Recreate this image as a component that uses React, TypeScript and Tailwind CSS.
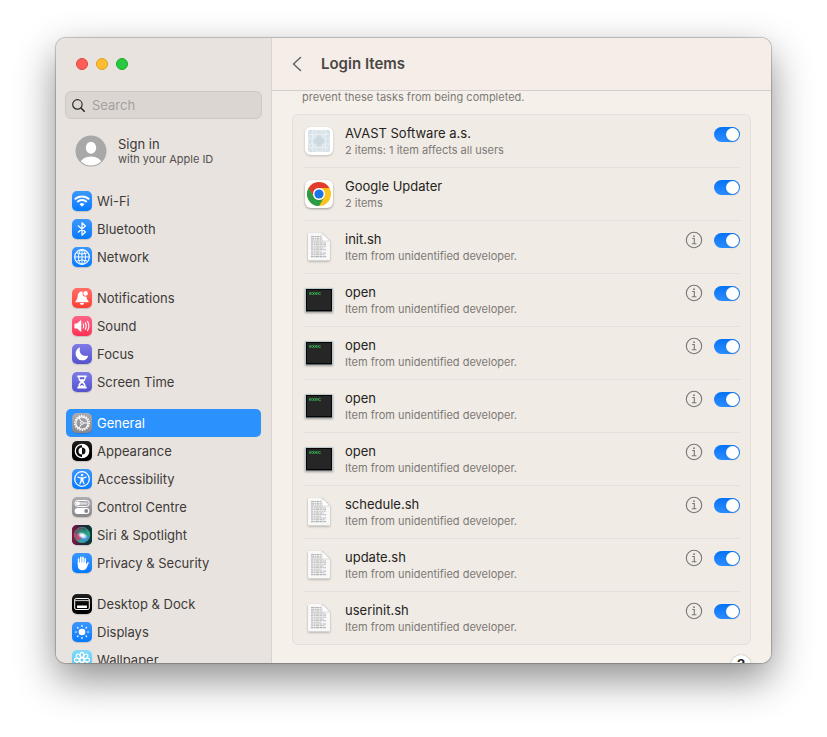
import type { ReactNode } from 'react';

const spokes = [0, 45, 90, 135, 180, 225, 270, 315];

const glyphs: Record<string, ReactNode> = {
  wifi: (
    <g fill="none" stroke="#fff" strokeWidth="1.9">
      <path d="M2.8 8.4a10.3 10.3 0 0 1 14.4 0" />
      <path d="M5.3 11a6.7 6.7 0 0 1 9.4 0" />
      <path d="M10 15.8 7.6 13.3a3.4 3.4 0 0 1 4.8 0z" fill="#fff" stroke="none" />
    </g>
  ),
  bluetooth: (
    <path
      d="M6.2 6.8 13.4 13 10 16.2V3.8L13.4 7 6.2 13.2"
      fill="none"
      stroke="#fff"
      strokeWidth="1.2"
      strokeLinejoin="round"
      strokeLinecap="round"
    />
  ),
  network: (
    <g fill="none" stroke="#fff" strokeWidth="1">
      <circle cx="10" cy="10" r="7.3" strokeWidth="1.2" />
      <ellipse cx="10" cy="10" rx="3.5" ry="7.3" />
      <path d="M10 2.7v14.6M2.7 10h14.6M4.3 5.8q5.7 2.6 11.4 0M4.3 14.2q5.7-2.6 11.4 0" />
    </g>
  ),
  bell: (
    <g fill="#fff">
      <path d="M10 3.4c-2.9 0-4.3 2.1-4.4 4.9-.1 2.4-.8 3.5-1.9 4.6-.6.6-.4 1.3.4 1.3h11.8c.8 0 1-.7.4-1.3-1.1-1.1-1.8-2.2-1.9-4.6-.1-2.8-1.5-4.9-4.4-4.9z" />
      <path d="M8 15h4a2 2 0 0 1-4 0z" />
      <circle cx="13.6" cy="5.4" r="3.1" fill="#ff5d55" />
      <circle cx="13.6" cy="5.4" r="2.3" />
    </g>
  ),
  sound: (
    <g fill="none" stroke="#fff" strokeWidth="1.1" strokeLinecap="round">
      <path d="M2.4 8.2c0-.5.3-.8.8-.8h1.9l3.4-3c.4-.3.8-.1.8.4v10.4c0 .5-.4.7-.8.4l-3.4-3H3.2c-.5 0-.8-.3-.8-.8z" fill="#fff" stroke="none" />
      <path d="M11.2 8q1.2 2 0 4M13.3 6.7q2 3.3 0 6.6M15.5 5.4q2.9 4.6 0 9.2" />
    </g>
  ),
  moon: (
    <path
      d="M7.5 3.6c.4-.2.7.1.5.5-1.5 4.8 1.9 8.7 7.4 7.7.5-.1.8.2.6.6a6.3 6.3 0 0 1-5.8 3.9A6.5 6.5 0 0 1 3.6 9.8c0-2.8 1.6-5.1 3.9-6.2z"
      fill="#fff"
    />
  ),
  hourglass: (
    <g>
      <path
        d="M5.3 3.5h9.4v1.7h-1c0 2.5-.9 3.7-2.4 4.8 1.5 1.1 2.4 2.3 2.4 4.8h1v1.7H5.3v-1.7h1c0-2.5.9-3.7 2.4-4.8-1.5-1.1-2.4-2.3-2.4-4.8h-1z"
        fill="#fff"
      />
      <path d="M7.6 5.2h4.8q0 1-.5 2H8.1q-.5-1-.5-2zM10 11q-2 1.4-2.3 3l2.3-1 2.3 1Q12 12.4 10 11z" fill="#5d58cf" />
    </g>
  ),
  gear: (
    <g fill="none" stroke="#fff">
      <circle cx="10" cy="10" r="7.3" strokeWidth="1.4" strokeDasharray="1.4 1.148" />
      <circle cx="10" cy="10" r="6.2" strokeWidth="1.2" />
      <circle cx="10" cy="10" r="1.4" strokeWidth=".9" />
      <path d="M11.5 10H16M9.3 8.7 7 4.8M9.3 11.3 7 15.2" strokeWidth="1" />
    </g>
  ),
  appearance: (
    <g>
      <circle cx="10" cy="10" r="6.7" fill="none" stroke="#fff" strokeWidth="1.3" />
      <path d="M10 3.3a6.7 6.7 0 0 1 0 13.4z" fill="#fff" />
      <path d="M10 6.5a3.5 3.5 0 0 0 0 7z" fill="#fff" />
      <path d="M10 6.5a3.5 3.5 0 0 1 0 7z" fill="#111" />
    </g>
  ),
  accessibility: (
    <g fill="none" stroke="#fff">
      <circle cx="10" cy="10" r="7.3" strokeWidth="1.2" />
      <circle cx="10" cy="6" r="1.3" fill="#fff" stroke="none" />
      <path d="M5.9 8.2 8.7 9h2.6l2.8-.8" strokeWidth="1.2" strokeLinecap="round" />
      <path d="M8.6 8.7h2.8v2.8l1.2 3.6-.7.3L10 12l-1.9 3.4-.7-.3 1.2-3.6z" fill="#fff" strokeWidth=".2" />
    </g>
  ),
  controls: (
    <g>
      <rect x="2.8" y="3.5" width="14.4" height="6" rx="3" fill="none" stroke="#fff" strokeWidth="1" />
      <circle cx="5.8" cy="6.5" r="2" fill="#fff" />
      <rect x="6" y="5.2" width="9.5" height="2.6" rx="1.3" fill="#fff" opacity=".6" />
      <rect x="2.6" y="11" width="14.8" height="6" rx="3" fill="#fff" />
      <circle cx="14.2" cy="14" r="1.9" fill="#85858a" />
    </g>
  ),
  siri: (
    <g>
      <defs>
        <linearGradient id="siri-back" x2="1" y2="0">
          <stop stopColor="#8c1544" />
          <stop offset=".45" stopColor="#27213c" />
          <stop offset="1" stopColor="#064038" />
        </linearGradient>
        <linearGradient id="siri-orb" x2="1" y2="1">
          <stop stopColor="#b3305f" />
          <stop offset=".4" stopColor="#2b6f6c" />
          <stop offset=".65" stopColor="#2fae90" />
          <stop offset="1" stopColor="#3574d8" />
        </linearGradient>
        <radialGradient id="siri-glow">
          <stop stopColor="#fff" />
          <stop offset=".4" stopColor="#eef6ff" stopOpacity=".9" />
          <stop offset="1" stopColor="#9cf" stopOpacity="0" />
        </radialGradient>
      </defs>
      <rect width="20" height="20" fill="url(#siri-back)" />
      <circle cx="10" cy="10" r="7.8" fill="url(#siri-orb)" />
      <circle cx="10" cy="10" r="7.8" fill="none" stroke="#6ac4a2" strokeWidth=".6" opacity=".7" />
      <path d="M4 6.5q5-3 10-.5 2 1.5 2 4-6-4-12-3.5z" fill="#1c9b78" opacity=".7" />
      <path d="M3 8.5q4 0 7 2.5-1 4-4 4.5-3.5-2.5-3-7z" fill="#f0386f" opacity=".75" />
      <path d="M10 11h6.5q-1 4.5-6 5.5-2-2-.5-5.5z" fill="#3f8df0" opacity=".75" />
      <ellipse cx="10.5" cy="10.5" rx="5.8" ry="3.6" fill="url(#siri-glow)" transform="rotate(25 10.5 10.5)" />
    </g>
  ),
  hand: (
    <g fill="none" stroke="#fff" strokeWidth="1.6" strokeLinecap="round">
      <path d="M6.6 6v5M8.8 4.2V11M11 4.2V11M13.2 5.8V11" />
      <path d="M5.8 9.5H14v2l1.4-2c.6-.8 1.6-.3 1.3.6l-1.9 4.3c-.7 1.8-2.1 2.8-4.3 2.8-3.2 0-4.7-2-4.7-4.8z" fill="#fff" stroke="none" />
    </g>
  ),
  dock: (
    <g>
      <rect x="2.7" y="4.5" width="14.6" height="11" rx="1.5" fill="none" stroke="#fff" strokeWidth="1" />
      <path d="M3.2 6.6h13.6" stroke="#fff" strokeWidth=".8" />
      <rect x="5" y="11.6" width="10" height="2.4" rx=".4" fill="#fff" />
    </g>
  ),
  sun: (
    <g fill="#fff">
      <circle cx="10" cy="10" r="3.3" />
      {spokes.map((a) => (
        <rect key={a} x="9.4" y="2.8" width="1.2" height="2.2" rx=".6" transform={`rotate(${a} 10 10)`} />
      ))}
    </g>
  ),
  flower: (
    <g fill="none" stroke="#fff" strokeWidth="1.1">
      <circle cx="10" cy="10" r="2.1" />
      {spokes.map((a) => (
        <ellipse key={a} cx="10" cy="4.9" rx="1.9" ry="2.5" transform={`rotate(${a} 10 10)`} />
      ))}
    </g>
  ),
};

const BLUE = 'bg-linear-to-b from-[#3a97ff] to-[#007aff]';
const PURPLE = 'bg-linear-to-b from-[#7f7ce8] to-[#5552cd]';
const GRAY = 'bg-linear-to-b from-[#aeaeb2] to-[#87878c]';
const BLACK = 'bg-linear-to-b from-[#222] to-black';

const groups = [
  [
    { name: 'Wi-Fi', glyph: 'wifi', tint: BLUE },
    { name: 'Bluetooth', glyph: 'bluetooth', tint: BLUE },
    { name: 'Network', glyph: 'network', tint: BLUE },
  ],
  [
    { name: 'Notifications', glyph: 'bell', tint: 'bg-linear-to-b from-[#ff6f68] to-[#ff3b30]' },
    { name: 'Sound', glyph: 'sound', tint: 'bg-linear-to-b from-[#ff6488] to-[#ff2d55]' },
    { name: 'Focus', glyph: 'moon', tint: PURPLE },
    { name: 'Screen Time', glyph: 'hourglass', tint: PURPLE },
  ],
  [
    { name: 'General', glyph: 'gear', tint: GRAY },
    { name: 'Appearance', glyph: 'appearance', tint: BLACK },
    { name: 'Accessibility', glyph: 'accessibility', tint: BLUE },
    { name: 'Control Centre', glyph: 'controls', tint: GRAY },
    { name: 'Siri & Spotlight', glyph: 'siri', tint: BLACK },
    { name: 'Privacy & Security', glyph: 'hand', tint: BLUE },
  ],
  [
    { name: 'Desktop & Dock', glyph: 'dock', tint: BLACK },
    { name: 'Displays', glyph: 'sun', tint: BLUE },
    { name: 'Wallpaper', glyph: 'flower', tint: 'bg-linear-to-b from-[#81dcfa] to-[#55c4ef]' },
  ],
];

const unknown = 'Item from unidentified developer.';

const items = [
  { name: 'AVAST Software a.s.', detail: '2 items: 1 item affects all users', icon: 'avast' },
  { name: 'Google Updater', detail: '2 items', icon: 'chrome' },
  { name: 'init.sh', detail: unknown, icon: 'doc' },
  { name: 'open', detail: unknown, icon: 'exec' },
  { name: 'open', detail: unknown, icon: 'exec' },
  { name: 'open', detail: unknown, icon: 'exec' },
  { name: 'open', detail: unknown, icon: 'exec' },
  { name: 'schedule.sh', detail: unknown, icon: 'doc' },
  { name: 'update.sh', detail: unknown, icon: 'doc' },
  { name: 'userinit.sh', detail: unknown, icon: 'doc' },
];

function ItemIcon({ icon }: { icon: string }) {
  if (icon === 'avast') {
    return (
      <svg viewBox="0 0 30 30" className="size-[30px] drop-shadow-[0_1px_1px_rgba(0,0,0,0.2)]">
        <rect x="1" y="1" width="28" height="28" rx="6" fill="#fff" />
        <rect x="4" y="4" width="22" height="22" rx="1" fill="#d4e0e5" />
        <g fill="none" stroke="#eef4f6" strokeWidth=".6">
          <circle cx="15" cy="15" r="10.5" />
          <circle cx="15" cy="15" r="7.5" />
          <path d="M4 8.5h22M4 21.5h22M8.5 4v22M21.5 4v22M4 4l22 22M26 4 4 26M4 12h22M4 18h22M12 4v22M18 4v22" />
        </g>
        <circle cx="15" cy="15" r="4.5" fill="#c9d9df" />
      </svg>
    );
  }
  if (icon === 'chrome') {
    return (
      <svg viewBox="0 0 30 30" className="size-[30px] drop-shadow-[0_1px_1px_rgba(0,0,0,0.35)]">
        <rect x="1" y="1" width="28" height="28" rx="6" fill="#fff" />
        <circle cx="15" cy="15" r="12" fill="#fcc31e" />
        <path d="M4.6 9A12 12 0 0 1 25.4 9H15a6 6 0 0 0-5.2 9z" fill="#e33b2e" />
        <path d="M4.6 9A12 12 0 0 0 15 27l5.2-9A6 6 0 0 1 9.8 18z" fill="#2a9b47" />
        <circle cx="15" cy="15" r="6" fill="#fff" />
        <circle cx="15" cy="15" r="4.6" fill="#1b73e8" />
      </svg>
    );
  }
  if (icon === 'exec') {
    return (
      <svg viewBox="0 0 30 30" className="size-[30px] drop-shadow-[0_1px_1px_rgba(0,0,0,0.35)]">
        <rect x="1" y="3" width="28" height="24" rx=".5" fill="#b9c9cd" />
        <rect x="2" y="4" width="26" height="22.5" fill="#050505" />
        <rect x="3" y="5" width="24" height="20" fill="#262626" />
        <text x="5" y="10" fontSize="5" fill="#35c759" className="font-['Liberation_Mono',monospace] font-bold">
          exec
        </text>
      </svg>
    );
  }
  return (
    <svg viewBox="0 0 30 30" className="size-[30px] drop-shadow-[0_1px_1px_rgba(0,0,0,0.3)]">
      <path d="M4.5 1H18l8 8v18.5a1 1 0 0 1-1 1H5a1 1 0 0 1-1-1v-26z" fill="#f8f8f8" />
      <g stroke="#b2b2b2" strokeWidth="1.1">
        <path d="M7 4.5h10M7 6.2h10.5M7 8h10.5" strokeDasharray="3 .5 1.5 .4" />
        <path d="M7 11h15M7 12.8h15M7 16h13M7 17.8h15M7 21h15M7 22.8h14M7 24.6h15" strokeDasharray="2.5 .5 1.2 .4 3.5 .5" />
        <path d="M7 9.6h12M7 14.4h15M7 19.4h10" strokeWidth=".7" strokeDasharray="2 .6" />
      </g>
      <path d="M18 1l8 8h-7a1 1 0 0 1-1-1z" fill="#fff" stroke="#c6c6c6" strokeWidth=".6" />
    </svg>
  );
}

function Sidebar() {
  return (
    <aside className="flex w-[216px] shrink-0 flex-col overflow-hidden border-r border-[#d8d3cf] bg-[#e8e3df]">
      <div className="flex gap-2 px-5 pt-5">
        <button aria-label="Close" className="size-3 rounded-full border border-[#e0443e] bg-[#ff5f57]" />
        <button aria-label="Minimise" className="size-3 rounded-full border border-[#dea123] bg-[#febc2e]" />
        <button aria-label="Zoom" className="size-3 rounded-full border border-[#1aab29] bg-[#28c840]" />
      </div>
      <label className="mx-[9px] mt-[21px] flex h-7 shrink-0 items-center gap-[7px] rounded-md border border-[#cec9c6] bg-[#dbd6d2] px-[6px]">
        <svg viewBox="0 0 13 13" className="size-[13px] shrink-0" fill="none" stroke="#2c2a29" strokeLinecap="round">
          <circle cx="5.4" cy="5.4" r="4.7" strokeWidth="1.2" />
          <path d="m9 9 3.2 3.2" strokeWidth="1.6" />
        </svg>
        <input
          type="search"
          aria-label="Search"
          placeholder="Search"
          className="w-full min-w-0 bg-transparent text-[13px] leading-5 outline-none placeholder:text-[#a6a19e]"
        />
      </label>
      <a href="#account" className="ml-[19px] mt-4 flex items-center gap-[11px]">
        <svg viewBox="0 0 32 32" className="size-8">
          <clipPath id="avatar">
            <circle cx="16" cy="16" r="14.5" />
          </clipPath>
          <circle cx="16" cy="16" r="15.5" fill="#a8a8a8" />
          <ellipse cx="16" cy="12.8" rx="5.2" ry="6" fill="#fff" />
          <ellipse cx="16" cy="28.5" rx="10.5" ry="7" fill="#fff" clipPath="url(#avatar)" />
        </svg>
        <span className="flex flex-col">
          <span className="text-[13px] leading-4 text-[#3d3a38]">Sign in</span>
          <span className="text-[11px] leading-[14px] text-[#54504e]">with your Apple ID</span>
        </span>
      </a>
      <nav className="mt-5 flex flex-col gap-[13px] px-[10px]">
        {groups.map((group) => (
          <ul key={group[0].name}>
            {group.map(({ name, glyph, tint }) => (
              <li key={name}>
                <a
                  href={`#${glyph}`}
                  className={`flex h-7 items-center gap-[5px] rounded-[5px] px-[6px] text-[13px] leading-5 ${
                    name === 'General' ? 'bg-[#2b92fd] text-white' : 'text-[#3d3a38]'
                  }`}
                >
                  <span className={`size-5 shrink-0 overflow-hidden rounded-[5px] shadow-[0_1px_1px_rgba(0,0,0,0.15)] ${tint}`}>
                    <svg viewBox="0 0 20 20" className="size-5">
                      {glyphs[glyph]}
                    </svg>
                  </span>
                  {name}
                </a>
              </li>
            ))}
          </ul>
        ))}
      </nav>
    </aside>
  );
}

function Item({ name, detail, icon }: { name: string; detail: string; icon: string }) {
  return (
    <li className="flex h-[53px] gap-[11px] border-b border-[#e4dfdb] last:h-[52px] last:border-b-0">
      <span className="mt-[11px] shrink-0">
        <ItemIcon icon={icon} />
      </span>
      <div className="min-w-0 flex-1 pt-[9px]">
        <p className="text-[13px] leading-[18px] text-[#252321]">{name}</p>
        <p className="text-[11px] leading-4 text-[#7d7976]">{detail}</p>
      </div>
      {detail === unknown && (
        <button aria-label={`About ${name}`} className="mt-[10px] size-[18px]">
          <svg viewBox="0 0 18 18" className="size-[18px]" fill="none" stroke="#7a7673">
            <circle cx="9" cy="9" r="7.7" strokeWidth="1.1" />
            <path d="M7.2 7.5H9.3V12.5M6.8 12.7h4.6" strokeWidth="1.1" />
            <circle cx="9" cy="5.2" r=".9" fill="#7a7673" stroke="none" />
          </svg>
        </button>
      )}
      <input
        type="checkbox"
        role="switch"
        defaultChecked
        aria-label={name}
        className="mt-3 flex h-[15px] w-[26px] shrink-0 appearance-none items-center rounded-full bg-linear-to-b from-[#0573f5] to-[#2a8dff] px-px before:size-[13px] before:rounded-full before:bg-white before:shadow-sm checked:justify-end not-checked:from-[#ccc] not-checked:to-[#ddd]"
      />
    </li>
  );
}

export default function App() {
  return (
    <div className="h-screen bg-white px-14 pt-[38px] pb-[74px] font-['Inter','Liberation_Sans',sans-serif]">
      <div className="flex h-full overflow-hidden rounded-[10px] shadow-[0_0_1px_1px_rgba(0,0,0,0.22),0_16px_40px_rgba(0,0,0,0.45)]">
        <Sidebar />
        <main className="flex min-w-0 flex-1 flex-col bg-[#f5f0ea]">
          <header className="flex h-[53px] shrink-0 items-center gap-[19px] border-b border-[#d5cfcb] bg-[#f5ede8] pl-5">
            <button aria-label="Back">
              <svg viewBox="0 0 10 16" className="h-4 w-[10px]" fill="none" stroke="#66615e" strokeWidth="1.5" strokeLinecap="round" strokeLinejoin="round">
                <path d="M8.5 1.5 1.5 8l7 6.5" />
              </svg>
            </button>
            <h1 className="text-[15px] font-semibold text-[#4b4745]">Login Items</h1>
          </header>
          <div className="min-h-0 flex-1 overflow-hidden px-5">
            <p className="px-[10px] text-[11px] leading-[13px] text-[#7d7976]">prevent these tasks from being completed.</p>
            <ul className="mt-[10px] rounded-md border border-[#e3deda] bg-[#f0ebe5] pr-[10px] pl-[11px]">
              {items.map((item, i) => (
                <Item key={i} {...item} />
              ))}
            </ul>
            <div className="mt-[10px] flex justify-end">
              <button
                aria-label="Help"
                className="size-5 rounded-full bg-white text-[15px] leading-5 font-semibold text-[#222] shadow-[0_0_2px_rgba(0,0,0,0.3)]"
              >
                ?
              </button>
            </div>
          </div>
        </main>
      </div>
    </div>
  );
}
